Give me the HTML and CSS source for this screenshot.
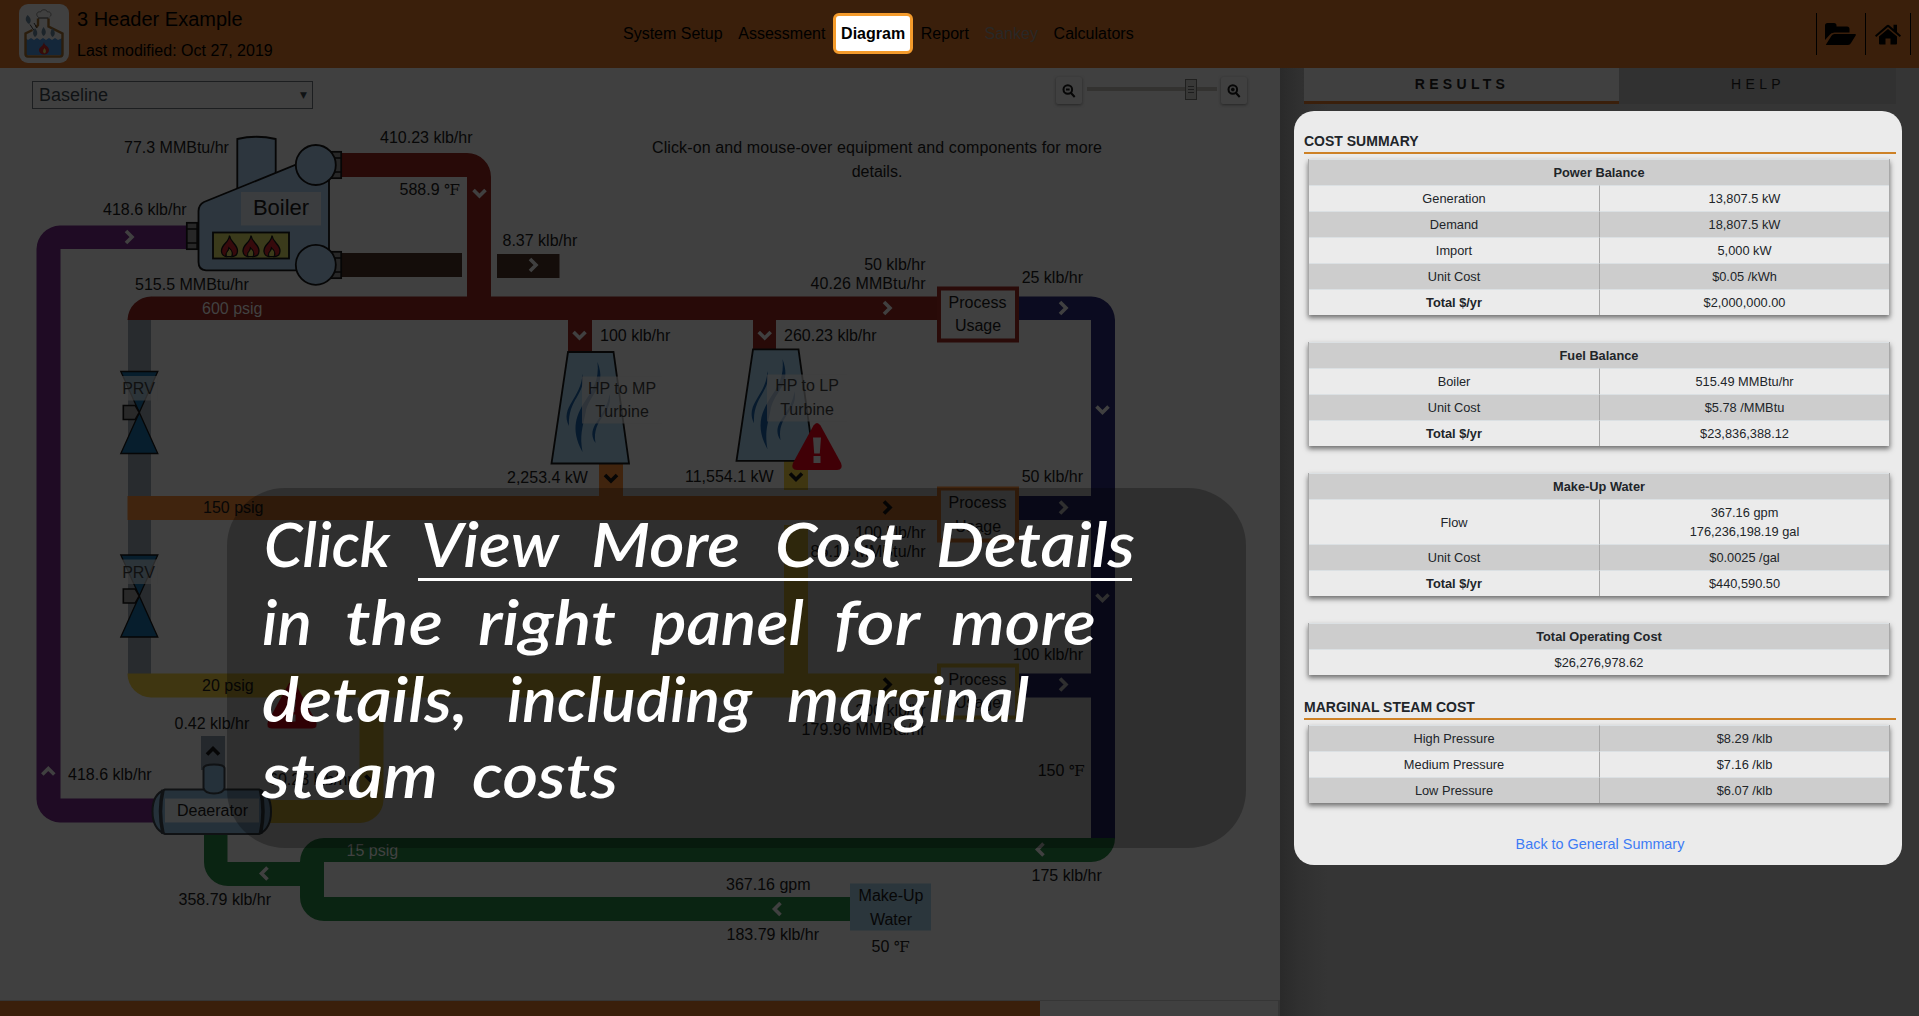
FILE: index.html
```html
<!DOCTYPE html>
<html lang="en">
<head>
<meta charset="utf-8">
<title>3 Header Example</title>
<link rel="stylesheet" href="styles.css">
</head>
<body>
<header class="header">
  <div class="brand">
    <svg class="logo" viewBox="0 0 50 59" width="50" height="59">
      <rect width="50" height="59" rx="9" fill="#404040"/>
      <path d="M6.500 34L9 36 12 34 15 36 18 34 21 36 24 34 27 36 30 34 33 36 36 34 39 36 43.500 34V51H6.500Z" fill="#14273a"/>
      <path d="M19 14.500V21L17 23.500M13.500 26L6.500 29.500V50Q6.500 52.500 9 52.500H41Q43.500 52.500 43.500 50V29.500L29.500 22.500V14.500" fill="none" stroke="#2b1d0c" stroke-width="2.400"/>
      <path d="M19 14h10.500M11 20.500l4 6M15 19l3 5" stroke="#111" fill="none"/>
      <path d="M19 13c-3-3 0-6 2.500-5 1-3 6-3 7 0 3-1 5 3 2 5" fill="none" stroke="#262626"/>
      <path d="M8.500 11c4 3 4 7 1.500 9-4-3-4-6-1.500-9zM16 24c3 4 3 7 0 9-3-3-2-6 0-9zM24.500 23c3 4 3 7 0 9-3-3-2-6 0-9zM33.500 24c3 4 3 7 0 9-3-3-2-6 0-9z" fill="#1c242a"/>
      <path d="M25 38c0 4 5 4 5 8a5 4.500 0 0 1-10 0c0-3 4-3 5-8z" fill="#360b0b"/>
      <path d="M25.500 44q3 4 0 5.500-3-1.500 0-5.500z" fill="#3c3a1b"/>
    </svg>
    <div class="brand-text">
      <div class="brand-title">3 Header Example</div>
      <div class="brand-date">Last modified: Oct 27, 2019</div>
    </div>
  </div>
  <nav class="nav">
    <span>System Setup</span><span>Assessment</span><span class="active">Diagram</span><span>Report</span><span class="disabled">Sankey</span><span>Calculators</span>
  </nav>
  <div class="actions">
    <span class="action folder"><svg width="31" height="22" viewBox="0 0 31 22"><path d="M0 17V2.500Q0 0 2.500 0H9Q11.500 0 11.500 2.500V3.500H22Q24.500 3.500 24.500 6V9.500H9.500Q6 9.500 4.500 12Z"/><path d="M1 21.500L6.500 12.700Q7.700 11 9.500 11H30Q31.500 11 30.500 12.800L26 20Q25 22 23 22H2Q.5 22 1 21.500Z"/></svg></span>
    <span class="action home"><svg width="26" height="21" viewBox="0 0 26 21"><path d="M4 12.500L13 5 22 12.500V19.500Q22 20.500 21 20.500H15.500V14.500H10.500V20.500H5Q4 20.500 4 19.500Z"/><path d="M0 11.500L11.800 1.200Q13 .2 14.200 1.200L18.500 5V.8H22V8L26 11.500 24.800 13 13 3 1.200 13Z"/></svg></span>
  </div>
</header>

<div class="body">
  <main class="main">
    <div class="toolbar">
      <div class="select"><span>Baseline</span><span class="caret">▼</span></div>
      <div class="zoom">
        <span class="zbtn"><svg width="14" height="14" viewBox="0 0 14 14"><circle cx="5.800" cy="5.500" r="4.300"/><path d="M9 9l3.700 4M4 5.500h3.600"/></svg></span>
        <span class="track"><span class="thumb"><i></i><i></i><i></i></span></span>
        <span class="zbtn"><svg width="14" height="14" viewBox="0 0 14 14"><circle cx="5.800" cy="5.500" r="4.300"/><path d="M9 9l3.700 4M4 5.500h3.600M5.800 3.700v3.600"/></svg></span>
      </div>
    </div>
    <svg class="diagram" width="1280" height="888" viewBox="0 112 1280 888">
      <defs>
        <path id="chev" d="M-3.500-6L2.500 0L-3.500 6" fill="none" stroke-width="3.600"/>
        <g id="flame"><path d="M0-10.500C-.5-3-8.500-2-8 5.500-7.700 9-5 10.500-3 10.500-4.500 6-.5 5.500-.5 2 3 5 3 8 2 10.500 5 10.500 8 9 8 5 8-2 1-3 0-10.500Z" fill="#360a0c" stroke="#060606" stroke-width="1.300"/><path d="M-.5 2C-.5 5.500-4.500 6-3 10.500H2C3.500 7 2.500 4.500-.5 2Z" fill="#3b3a1a" stroke="#060606"/></g>
        <g id="nozzle"><rect x=".8" y=".8" width="10.400" height="26.400" fill="#272727" stroke="#060606" stroke-width="1.700"/><path d="M1 7h10M1 21h10" stroke="#060606" stroke-width="1.500"/></g>
        <g id="turbine">
          <path d="M16.500 0H62L77.500 111.500H0Z" fill="#2d383f" stroke="#060606" stroke-width="1.800"/>
          <path d="M31 22C35 42 16 47 17.500 74 8 55 30 46 31 22ZM46 10C56 36 37 42 34 61 31 76 28 83 31 100 18 76 26 62 33 50 41 38 48 28 46 10ZM58 42C62 62 40 66 44 91 33 74 55 66 58 42Z" fill="#071a2d"/>
        </g>
        <g id="prv"><path d="M-18.500 0H18.500L0 41ZM0 41L18.500 82H-18.500Z" fill="#071e2d" stroke="#060606" stroke-width="1.300"/><path d="M-16 34H-4L0 41-4 48H-16Z" fill="#292929" stroke="#060606" stroke-width="1.600"/><rect x="-18" y="4.500" width="36" height="24.500" fill="#404040" fill-opacity=".65"/></g>
        <g id="warn"><path d="M21.500 2.500Q25-2.500 28.500 2.500L49 40Q51.500 46.500 45 47H5Q-1.500 46.500 1 40Z" fill="#400006"/><path d="M21 14.500h8l-1.200 16h-5.600zM21.500 33h7v7h-7z" fill="#404040"/></g>
      </defs>

      <g fill="#1f0b24"><path d="M186 225.500H60A24 24 0 0 0 36.500 249V799A24 24 0 0 0 60 822.500H156V798.500H60.500V249H186Z"/></g>
      <g fill="#282b2e"><path d="M128 320h23v176h-23zM128 520h23v154h-23z"/></g>
      <path fill="#24282c" d="M201 736h24v34h-24z"/>
      <path fill="#280a08" d="M340 153H467A24 24 0 0 1 491 177V296.500H938V320H776V350H753V320H592V352H568V320H127.500A24 24 0 0 1 151.500 296.500H467V177H340Z"/>
      <path fill="#140d0a" d="M341 253h121v24h-121zM497 254h62.500v24h-62.500z"/>
      <path fill="#40240e" d="M127.500 496H599V463H623V496H938V520H127.500Z"/>
      <path fill="#3f3611" d="M784 461h24v29h-24zM784 525h24v150h-24zM127.500 673.500H938V697.500H383.500V800A24 24 0 0 1 359.500 823H268V800H359.500V697.500H151.500A24 24 0 0 1 127.500 673.500Z"/>
      <path fill="#0b0b20" d="M1018 296.500H1091A24 24 0 0 1 1115 320V839H1091V697.500H1018V673.500H1091V520H1018V496H1091V320H1018Z"/>
      <path fill="#0a2412" d="M204 832V862A24 24 0 0 0 228 886H300V897A24 24 0 0 0 324 921H851V897H324V862H1091A24 24 0 0 0 1115 838H324A24 24 0 0 0 300 862H227.500V832Z"/>

      <g fill="#404040" stroke-width="4">
        <rect x="939" y="288.500" width="78" height="52" stroke="#2a0b09"/>
        <rect x="939" y="488.500" width="78" height="52" stroke="#40240e"/>
        <rect x="939" y="665.500" width="78" height="52" stroke="#3f3611"/>
      </g>
      <rect x="850" y="883.500" width="81" height="47" fill="#2b363c"/>

      <g stroke="#060606" stroke-width="1.800" fill="#2d363e">
        <path d="M237.300 195V139Q256.500 134.500 275.700 139V180"/>
        <path d="M198.500 211Q198.500 205 204 202L300 163 329 175V270.300H206Q198.500 270 198.500 262Z"/>
        <use href="#nozzle" x="186" y="222"/>
        <use href="#nozzle" x="330" y="151"/>
        <use href="#nozzle" x="330" y="251"/>
        <circle cx="315.800" cy="165" r="20"/>
        <circle cx="315.800" cy="264.800" r="20"/>
        <rect x="213" y="232.500" width="76" height="26" fill="#3a3a1b"/>
      </g>
      <use href="#flame" x="229.500" y="246"/><use href="#flame" x="251" y="246"/><use href="#flame" x="272" y="246"/>
      <rect x="241" y="192" width="80" height="33.500" fill="#3b3d3f"/>

      <use href="#turbine" x="551.500" y="352"/>
      <use href="#turbine" x="736.500" y="349.300"/>
      <path d="M582 376.500h80v47h-80zM767 374.500h80v47h-80z" fill="#404040" fill-opacity=".7"/>
      <use href="#prv" x="139.300" y="371.500"/>
      <use href="#prv" x="139.300" y="555"/>
      <use href="#warn" x="792" y="423"/>
      <use href="#warn" x="267" y="681.500"/>

      <g stroke="#101214" stroke-width="2" fill="#25313a">
        <path d="M165 789.500H259Q271 794 271 811.500T259 834H165Q152.500 829 152.500 811.500T165 789.500Z"/>
        <path d="M163 790Q158 811 163 833.500M260.500 790Q265.500 811 260.500 833.500" fill="none" stroke-width="3.500"/>
        <path d="M203.500 768Q204 764.500 214 764.500T224.500 768V788Q223 793.500 214 793.500T203.500 788Z"/>
      </g>
      <rect x="165" y="798.500" width="94" height="24" fill="#3d3f40"/>

      <g class="light-chev">
        <use href="#chev" x="129.500" y="237"/>
        <use href="#chev" x="533.500" y="265"/>
        <use href="#chev" x="887.500" y="308"/>
        <use href="#chev" x="1063.500" y="308"/><use href="#chev" x="1063.500" y="507.500"/><use href="#chev" x="1063.500" y="684.500"/>
        <use href="#chev" transform="translate(479.500 193.500) rotate(90)"/>
        <use href="#chev" transform="translate(579.500 335.500) rotate(90)"/>
        <use href="#chev" transform="translate(764.700 335.500) rotate(90)"/>
        <use href="#chev" transform="translate(1102.500 410) rotate(90)"/>
        <use href="#chev" transform="translate(1102.500 598) rotate(90)"/>
        <use href="#chev" transform="translate(48.300 771) rotate(-90)"/>
        <use href="#chev" transform="translate(1040 849.500) rotate(180)"/>
        <use href="#chev" transform="translate(264 873.500) rotate(180)"/>
        <use href="#chev" transform="translate(777 909) rotate(180)"/>
      </g>
      <g class="dark-chev">
        <use href="#chev" x="887.500" y="507.500"/><use href="#chev" x="887.500" y="684.500"/>
        <use href="#chev" transform="translate(611 478.500) rotate(90)"/>
        <use href="#chev" transform="translate(796 477) rotate(90)"/>
        <use href="#chev" transform="translate(213 751) rotate(-90)"/>
        <use href="#chev" transform="translate(371.500 779) rotate(90)"/>
      </g>

      <g class="label">
        <text x="124" y="153">77.3 MMBtu/hr</text>
        <text x="103" y="215">418.6 klb/hr</text>
        <text x="380" y="143">410.23 klb/hr</text>
        <text x="399.500" y="195">588.9 <tspan class="deg">℉</tspan></text>
        <text x="502.500" y="246">8.37 klb/hr</text>
        <text x="135" y="290">515.5 MMBtu/hr</text>
        <text x="600" y="341">100 klb/hr</text>
        <text x="784" y="341">260.23 klb/hr</text>
        <text x="507" y="483">2,253.4 kW</text>
        <text x="685" y="481.500">11,554.1 kW</text>
        <text x="203" y="513">150 psig</text>
        <text x="202" y="691">20 psig</text>
        <text x="174.500" y="729">0.42 klb/hr</text>
        <text x="68" y="779.500">418.6 klb/hr</text>
        <text x="269" y="785">60.23 klb/hr</text>
        <text x="178.500" y="905">358.79 klb/hr</text>
        <text x="1031.500" y="881">175 klb/hr</text>
        <text x="726" y="890">367.16 gpm</text>
        <text x="726.500" y="940">183.79 klb/hr</text>
        <text x="871.500" y="952">50 <tspan class="deg">℉</tspan></text>
      </g>
      <g class="label end">
        <text x="925.500" y="270">50 klb/hr</text>
        <text x="925.500" y="289" textLength="115">40.26 MMBtu/hr</text>
        <text x="925.500" y="538">100 klb/hr</text>
        <text x="925.500" y="557" textLength="115">86.13 MMBtu/hr</text>
        <text x="925.500" y="715.500">200 klb/hr</text>
        <text x="925.500" y="735" textLength="124">179.96 MMBtu/hr</text>
        <text x="1083" y="283">25 klb/hr</text>
        <text x="1083" y="482">50 klb/hr</text>
        <text x="1083" y="659.500">100 klb/hr</text>
        <text x="1084.500" y="776">150 <tspan class="deg">℉</tspan></text>
      </g>
      <g class="label mid">
        <text x="877" y="153" textLength="450">Click-on and mouse-over equipment and components for more</text>
        <text x="877" y="177">details.</text>
        <text class="boiler" x="281" y="215">Boiler</text>
        <text x="977.500" y="308">Process</text><text x="978" y="331">Usage</text>
        <text x="977.500" y="508">Process</text><text x="978" y="531.500">Usage</text>
        <text x="977.500" y="684.500">Process</text><text x="978" y="708">Usage</text>
        <text x="891" y="901">Make-Up</text><text x="891" y="925">Water</text>
        <text x="212.500" y="815.500">Deaerator</text>
      </g>
      <g class="label mid soft">
        <text x="622" y="394">HP to MP</text><text x="622" y="417">Turbine</text>
        <text x="807" y="391">HP to LP</text><text x="807" y="415">Turbine</text>
        <text x="138.500" y="394">PRV</text><text x="138.500" y="577.500">PRV</text>
      </g>
      <g class="label light">
        <text x="202" y="314">600 psig</text>
        <text x="346.500" y="856">15 psig</text>
      </g>
    </svg>

    <svg class="caption" width="1019" height="360" viewBox="227 488 1019 360">
      <g>
        <text x="264" y="567" textLength="126" lengthAdjust="spacingAndGlyphs">Click</text>
        <text x="421" y="567" textLength="138" lengthAdjust="spacingAndGlyphs">View</text>
        <text x="591" y="567" textLength="149" lengthAdjust="spacingAndGlyphs">More</text>
        <text x="775" y="567" textLength="128" lengthAdjust="spacingAndGlyphs">Cost</text>
        <text x="936" y="567" textLength="199" lengthAdjust="spacingAndGlyphs">Details</text>
        <text x="262" y="645" textLength="50" lengthAdjust="spacingAndGlyphs">in</text>
        <text x="345" y="645" textLength="98" lengthAdjust="spacingAndGlyphs">the</text>
        <text x="478" y="645" textLength="138" lengthAdjust="spacingAndGlyphs">right</text>
        <text x="651" y="645" textLength="153" lengthAdjust="spacingAndGlyphs">panel</text>
        <text x="834" y="645" textLength="86" lengthAdjust="spacingAndGlyphs">for</text>
        <text x="951" y="645" textLength="145" lengthAdjust="spacingAndGlyphs">more</text>
        <text x="262" y="722" textLength="206" lengthAdjust="spacingAndGlyphs">details,</text>
        <text x="507" y="722" textLength="245" lengthAdjust="spacingAndGlyphs">including</text>
        <text x="787" y="722" textLength="242" lengthAdjust="spacingAndGlyphs">marginal</text>
        <text x="262" y="798" textLength="176" lengthAdjust="spacingAndGlyphs">steam</text>
        <text x="472" y="798" textLength="146" lengthAdjust="spacingAndGlyphs">costs</text>
      </g>
      <rect x="418" y="578" width="714" height="3" fill="#fff"/>
    </svg>
    <div class="progress"><div class="fill"></div></div>
  </main>

  <aside class="side">
    <div class="tabs"><div class="tab on">RESULTS</div><div class="tab">HELP</div></div>
    <section class="card">
      <h2>COST SUMMARY</h2>
      <table>
        <tr><th colspan="2">Power Balance</th></tr>
        <tr><td>Generation</td><td>13,807.5 kW</td></tr>
        <tr><td>Demand</td><td>18,807.5 kW</td></tr>
        <tr><td>Import</td><td>5,000 kW</td></tr>
        <tr><td>Unit Cost</td><td>$0.05 /kWh</td></tr>
        <tr><td><b>Total $/yr</b></td><td>$2,000,000.00</td></tr>
      </table>
      <table>
        <tr><th colspan="2">Fuel Balance</th></tr>
        <tr><td>Boiler</td><td>515.49 MMBtu/hr</td></tr>
        <tr><td>Unit Cost</td><td>$5.78 /MMBtu</td></tr>
        <tr><td><b>Total $/yr</b></td><td>$23,836,388.12</td></tr>
      </table>
      <table>
        <tr><th colspan="2">Make-Up Water</th></tr>
        <tr class="tall"><td>Flow</td><td>367.16 gpm<br>176,236,198.19 gal</td></tr>
        <tr><td>Unit Cost</td><td>$0.0025 /gal</td></tr>
        <tr><td><b>Total $/yr</b></td><td>$440,590.50</td></tr>
      </table>
      <table>
        <tr><th colspan="2">Total Operating Cost</th></tr>
        <tr><td colspan="2">$26,276,978.62</td></tr>
      </table>
      <h2 class="second">MARGINAL STEAM COST</h2>
      <table>
        <tr><td>High Pressure</td><td>$8.29 /klb</td></tr>
        <tr><td>Medium Pressure</td><td>$7.16 /klb</td></tr>
        <tr><td>Low Pressure</td><td>$6.07 /klb</td></tr>
      </table>
      <a class="back">Back to General Summary</a>
    </section>
  </aside>
</div>
</body>
</html>
```

FILE: styles.css
```css
* { box-sizing: border-box; }
body {
  margin: 0;
  width: 1919px;
  height: 1016px;
  overflow: hidden;
  background: #404040;
  color: #080808;
  font-family: "Liberation Sans", Arial, sans-serif;
  font-size: 16px;
}
.header {
  display: flex;
  height: 68px;
  background: #3a1f0b;
  color: #000;
}
.brand { display: flex; width: 623px; padding: 4px 0 0 19px; gap: 8px; }
.logo { flex: none; }
.brand-title { font-size: 20px; line-height: 24px; padding-top: 3px; }
.brand-date { line-height: 20px; padding-top: 10px; }
.nav { display: flex; align-items: center; gap: 15.700px; height: 67px; white-space: nowrap; }
.nav .active {
  display: flex;
  align-items: center;
  justify-content: center;
  width: 80px;
  height: 41px;
  margin: 0 -8px;
  background: #fff;
  border: 3px solid #f49b2c;
  border-radius: 6px;
  font-weight: bold;
}
.nav .disabled { color: #292827; }
.actions { display: flex; margin: 13px 8px 13px auto; border-right: 1px solid #000; }
.action { display: flex; align-items: center; justify-content: center; border-left: 1px solid #000; }
.folder { width: 49px; padding-right: 1px; }
.home { width: 45px; }

.body { display: flex; height: 948px; }
.main { position: relative; width: 1280px; flex: none; display: flex; flex-direction: column; }
.toolbar { display: flex; justify-content: space-between; height: 44px; padding: 0 33px 0 32px; }
.select {
  display: flex;
  align-items: center;
  justify-content: space-between;
  width: 281px;
  height: 28px;
  margin-top: 13px;
  padding: 0 5px 0 6px;
  border: 1px solid #1c1e20;
  color: #0f1214;
  font-size: 18px;
}
.caret { font-size: 9px; font-family: "DejaVu Sans", sans-serif; }
.zoom { display: flex; gap: 4.500px; padding-top: 9px; }
.zbtn {
  display: flex;
  align-items: center;
  justify-content: center;
  width: 26px;
  height: 27px;
  border-radius: 2px;
  box-shadow: 0 1px 3px #262626;
}
.zbtn svg { fill: none; stroke: #060606; stroke-width: 2; }
.track { display: flex; align-items: center; width: 130px; height: 4px; margin-top: 10px; padding-left: 98px; background: #333230; }
.thumb {
  display: flex;
  flex-direction: column;
  align-items: center;
  justify-content: center;
  gap: 2px;
  width: 12px;
  height: 21px;
  border: 1px solid #20201f;
  background: #383837;
}
.thumb i { width: 6px; height: 1px; background: #1d1d1d; }
.diagram { display: block; flex: none; }
.label { font-size: 16px; fill: #070707; }
.label.end { text-anchor: end; }
.label.mid { text-anchor: middle; }
.label.soft { fill: #101010; }
.label.light { fill: #424242; }
.label .boiler { font-size: 22px; }
.deg { font-family: "Liberation Serif", "DejaVu Serif", serif; font-size: 15px; }
.light-chev { stroke: #404040; }
.dark-chev { stroke: #060606; }
.caption {
  position: absolute;
  left: 227px;
  top: 420px;
  background: rgba(0, 0, 0, .265);
  border-radius: 58px;
  fill: #fff;
  font-family: Lato, sans-serif;
  font-style: italic;
  font-weight: 600;
  font-size: 61px;
}
.progress { height: 16px; border: 1px solid #363636; border-width: 1px 2px 0 0; }
.fill { width: 1040px; height: 16px; background: #3a1f0b; }

.side {
  flex: 1;
  padding: 0 17px 0 14px;
  background: linear-gradient(90deg, #2a2a2a, #303030 20px, #353535 48px);
}
.tabs { display: flex; height: 36px; margin: 0 6px 7px 10px; font-size: 14px; letter-spacing: 4.300px; text-align: center; line-height: 32px; }
.tab { flex: 1; background: #313131; padding-left: 1px; }
.tab.on { flex: none; width: 315px; background: #404040; border-bottom: 3px solid #3a1f0b; font-weight: bold; }
.card {
  display: flex;
  flex-direction: column;
  height: 754px;
  padding: 22px 6px 0 10px;
  background: #ebebeb;
  border-radius: 20px;
  color: #212529;
}
h2 { margin: 0 0 5px; height: 21px; font-size: 14px; line-height: 16px; border-bottom: 2px solid #cd8126; }
table {
  width: 582px;
  margin: 0 0 27px 4px;
  border-spacing: 0;
  table-layout: fixed;
  font-size: 12.800px;
  line-height: 19px;
  text-align: center;
  border-left: 1px solid #a8a8a8;
  border-right: 1px solid #a8a8a8;
  box-shadow: 0 3px 5px #707070;
}
h2.second { margin-top: -3px; }
h2.second + table { margin-bottom: 0; }
tr { height: 26px; background: #ebebeb; }
tr:nth-child(odd) { background: #cdcdcd; }
td, th { padding: 0; border-top: 1px solid #dbe0e3; }
td + td { border-left: 1px solid #a8a8a8; }
.tall { height: 45px; }
.back { margin-top: 31px; text-align: center; font-size: 14.400px; line-height: 20px; color: #3d7bf5; }
```
